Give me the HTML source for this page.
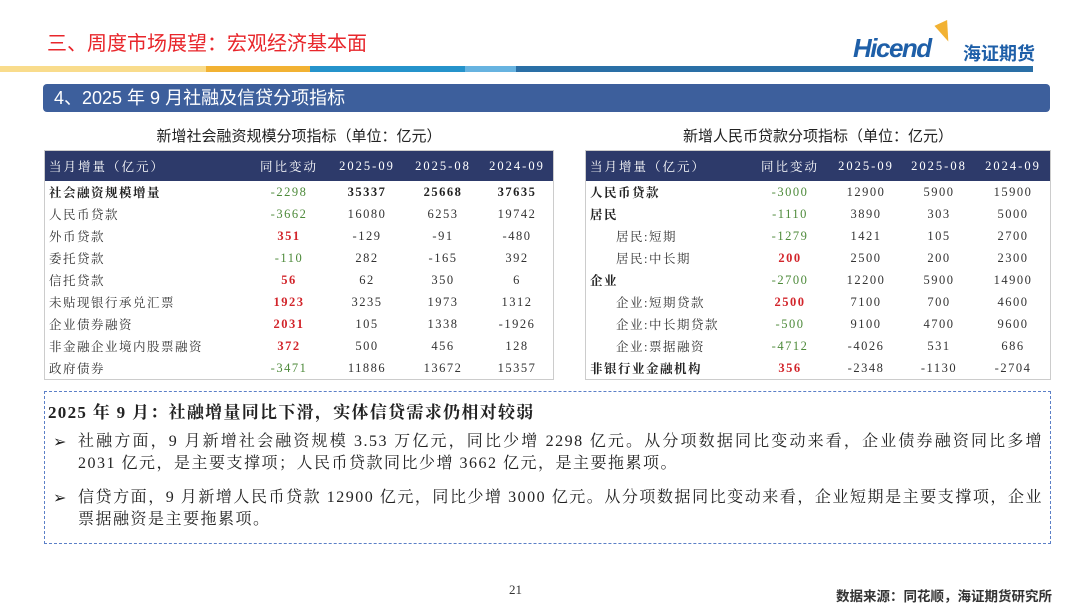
<!DOCTYPE html>
<html><head><meta charset="utf-8"><style>
body{margin:0;width:1080px;height:608px;background:#fff;position:relative;overflow:hidden;font-family:"Liberation Serif","Noto Serif CJK SC",serif;}
.a{position:absolute}
.t{font-family:"Liberation Sans","Noto Sans CJK SC",sans-serif}
table{border-collapse:collapse;font-size:12.5px;color:#333;}
td{height:22px;padding:0;white-space:nowrap;letter-spacing:1.5px}
th{height:30px;background:#2d3a6a;color:#fff;font-weight:normal;font-size:12.5px;letter-spacing:2px;padding:0}
.g{color:#4d8a3a}.r{color:#d2252b;font-weight:bold}
.c{text-align:center}.b{font-weight:bold;color:#222}
.ind{padding-left:30px}
</style></head><body>
<div class="a t" style="left:47px;top:27px;font-size:20px;color:#e8262b;">三、周度市场展望：宏观经济基本面</div>
<div class="a t" style="left:853px;top:33px;font-size:26px;font-weight:bold;color:#1e5fa8;font-style:italic;letter-spacing:-1.5px">Hicend</div>
<div class="a" style="left:938px;top:22px;width:0;height:0;border-left:6px solid transparent;border-right:8px solid transparent;border-top:20px solid #f2b233;transform:rotate(-25deg)"></div>
<div class="a t" style="left:963px;top:40px;font-size:18px;font-weight:bold;color:#1e5fa8">海证期货</div>
<div class="a" style="left:0;top:66px;width:206px;height:6px;background:#f9dc8c"></div>
<div class="a" style="left:206px;top:66px;width:104px;height:6px;background:#f2b233"></div>
<div class="a" style="left:310px;top:66px;width:155px;height:6px;background:#2593cb"></div>
<div class="a" style="left:465px;top:66px;width:51px;height:6px;background:#67b3e0"></div>
<div class="a" style="left:516px;top:66px;width:517px;height:6px;background:#2a6fa6"></div>
<div class="a t" style="left:43px;top:84px;width:1007px;height:28px;background:#3d5f9c;border-radius:4px;color:#fff;font-size:18px;line-height:28px;"><span style="padding-left:11px">4、2025 年 9 月社融及信贷分项指标</span></div>

<div class="a t" style="left:44px;top:125px;width:510px;text-align:center;font-size:15px;color:#222">新增社会融资规模分项指标（单位：亿元）</div>
<div class="a t" style="left:585px;top:125px;width:466px;text-align:center;font-size:15px;color:#222">新增人民币贷款分项指标（单位：亿元）</div>

<div class="a" style="left:44px;top:150px;border:1px solid #ccc">
<table style="width:508px">
<tr><th style="text-align:left;padding-left:4px;width:200px">当月增量（亿元）</th><th style="width:80px">同比变动</th><th style="width:76px">2025-09</th><th style="width:76px">2025-08</th><th>2024-09</th></tr>
<tr class="b"><td style="padding-left:4px">社会融资规模增量</td><td class="c g" style="font-weight:normal">-2298</td><td class="c">35337</td><td class="c">25668</td><td class="c">37635</td></tr>
<tr><td style="padding-left:4px">人民币贷款</td><td class="c g">-3662</td><td class="c">16080</td><td class="c">6253</td><td class="c">19742</td></tr>
<tr><td style="padding-left:4px">外币贷款</td><td class="c r">351</td><td class="c">-129</td><td class="c">-91</td><td class="c">-480</td></tr>
<tr><td style="padding-left:4px">委托贷款</td><td class="c g">-110</td><td class="c">282</td><td class="c">-165</td><td class="c">392</td></tr>
<tr><td style="padding-left:4px">信托贷款</td><td class="c r">56</td><td class="c">62</td><td class="c">350</td><td class="c">6</td></tr>
<tr><td style="padding-left:4px">未贴现银行承兑汇票</td><td class="c r">1923</td><td class="c">3235</td><td class="c">1973</td><td class="c">1312</td></tr>
<tr><td style="padding-left:4px">企业债券融资</td><td class="c r">2031</td><td class="c">105</td><td class="c">1338</td><td class="c">-1926</td></tr>
<tr><td style="padding-left:4px">非金融企业境内股票融资</td><td class="c r">372</td><td class="c">500</td><td class="c">456</td><td class="c">128</td></tr>
<tr><td style="padding-left:4px">政府债券</td><td class="c g">-3471</td><td class="c">11886</td><td class="c">13672</td><td class="c">15357</td></tr>
</table></div>

<div class="a" style="left:585px;top:150px;border:1px solid #ccc">
<table style="width:464px">
<tr><th style="text-align:left;padding-left:4px;width:160px">当月增量（亿元）</th><th style="width:80px">同比变动</th><th style="width:72px">2025-09</th><th style="width:74px">2025-08</th><th>2024-09</th></tr>
<tr><td class="b" style="padding-left:4px">人民币贷款</td><td class="c g">-3000</td><td class="c">12900</td><td class="c">5900</td><td class="c">15900</td></tr>
<tr><td class="b" style="padding-left:4px">居民</td><td class="c g">-1110</td><td class="c">3890</td><td class="c">303</td><td class="c">5000</td></tr>
<tr><td class="ind">居民:短期</td><td class="c g">-1279</td><td class="c">1421</td><td class="c">105</td><td class="c">2700</td></tr>
<tr><td class="ind">居民:中长期</td><td class="c r">200</td><td class="c">2500</td><td class="c">200</td><td class="c">2300</td></tr>
<tr><td class="b" style="padding-left:4px">企业</td><td class="c g">-2700</td><td class="c">12200</td><td class="c">5900</td><td class="c">14900</td></tr>
<tr><td class="ind">企业:短期贷款</td><td class="c r">2500</td><td class="c">7100</td><td class="c">700</td><td class="c">4600</td></tr>
<tr><td class="ind">企业:中长期贷款</td><td class="c g">-500</td><td class="c">9100</td><td class="c">4700</td><td class="c">9600</td></tr>
<tr><td class="ind">企业:票据融资</td><td class="c g">-4712</td><td class="c">-4026</td><td class="c">531</td><td class="c">686</td></tr>
<tr><td class="b" style="padding-left:4px">非银行业金融机构</td><td class="c r">356</td><td class="c">-2348</td><td class="c">-1130</td><td class="c">-2704</td></tr>
</table></div>

<div class="a" style="left:44px;top:391px;width:1005px;height:151px;border:1px dashed #5b7fc7;color:#222;font-size:16px">
<div class="a" style="left:3px;top:6px;font-weight:bold;font-size:17px;letter-spacing:1.3px">2025 年 9 月：社融增量同比下滑，实体信贷需求仍相对较弱</div>
<div class="a" style="left:8px;top:40px">➢</div>
<div class="a" style="left:33px;top:39px;width:965px;line-height:22px;letter-spacing:1.5px;text-align:justify">社融方面，9 月新增社会融资规模 3.53 万亿元，同比少增 2298 亿元。从分项数据同比变动来看，企业债券融资同比多增 2031 亿元，是主要支撑项；人民币贷款同比少增 3662 亿元，是主要拖累项。</div>
<div class="a" style="left:8px;top:96px">➢</div>
<div class="a" style="left:33px;top:95px;width:965px;line-height:22px;letter-spacing:1.5px;text-align:justify">信贷方面，9 月新增人民币贷款 12900 亿元，同比少增 3000 亿元。从分项数据同比变动来看，企业短期是主要支撑项，企业票据融资是主要拖累项。</div>
</div>
<div class="a" style="left:509px;top:582px;font-size:13px;color:#333">21</div>
<div class="a t" style="left:836px;top:585px;font-size:13.5px;font-weight:bold;color:#333">数据来源：同花顺，海证期货研究所</div>
</body></html>
